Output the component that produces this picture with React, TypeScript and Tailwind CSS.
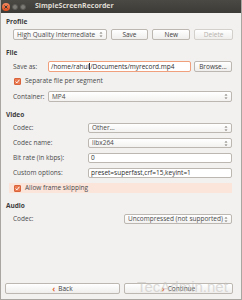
import React from "react";

function Spin() {
  return (
    <svg width="4" height="7" viewBox="0 0 4 7" className="shrink-0">
      <path d="M0.5 2.6 L2 1 L3.5 2.6 Z" fill="#7a7670" />
      <path d="M0.5 4.4 L2 6 L3.5 4.4 Z" fill="#7a7670" />
    </svg>
  );
}

function Combo({ text, className = "" }: { text: string; className?: string }) {
  return (
    <div
      className={
        "flex items-center h-full rounded-[2px] border border-[#bcb7b0] bg-gradient-to-b from-[#ffffff] to-[#f3f2f1] pl-[3px] pr-[3px] overflow-hidden " +
        className
      }
    >
      <span className="flex-1 whitespace-nowrap overflow-hidden">{text}</span>
      <Spin />
    </div>
  );
}

function Btn({ children, disabled = false, className = "" }: { children: React.ReactNode; disabled?: boolean; className?: string }) {
  return (
    <div
      className={
        "flex items-center justify-center h-full rounded-[2px] border border-[#bcb7b0] bg-gradient-to-b from-[#ffffff] to-[#efeeed] " +
        (disabled ? "text-[#b5b1ac] border-[#d3cfca] " : "text-[#3c3c3c] ") +
        className
      }
    >
      {children}
    </div>
  );
}

function Check() {
  return (
    <div className="w-[7px] h-[7px] rounded-[1px] bg-[#ea7b52] border border-[#d9643b] flex items-center justify-center shrink-0">
      <svg width="5" height="5" viewBox="0 0 5 5">
        <path d="M0.6 2.6 L1.9 3.9 L4.4 0.8" stroke="#fff" strokeWidth="1" fill="none" />
      </svg>
    </div>
  );
}

function Header({ children, className = "" }: { children: React.ReactNode; className?: string }) {
  return <div className={"h-[8px] flex items-center pl-[5px] font-bold text-[#3c3c3c] " + className}>{children}</div>;
}

export default function App() {
  return (
    <div
      className="relative w-[242px] h-[300px] flex flex-col bg-[#f2f1f0] border-x border-b border-[#a9a6a1] text-[6.5px] text-[#4a4a4a] overflow-hidden"
      style={{ fontFamily: '"Open Sans", "DejaVu Sans", sans-serif' }}
    >
      {/* title bar */}
      <div className="h-[13px] flex items-center bg-gradient-to-b from-[#4a4944] to-[#3c3b37] pl-[2px] -mx-px">
        <div className="w-[8px] h-[8px] rounded-full bg-gradient-to-b from-[#f58a5e] to-[#df4a16] flex items-center justify-center">
          <svg width="4" height="4" viewBox="0 0 4 4">
            <path d="M0.5 0.5 L3.5 3.5 M3.5 0.5 L0.5 3.5" stroke="#3c3b37" strokeWidth="1" />
          </svg>
        </div>
        <div className="ml-[2px] w-[6px] h-[6px] rounded-full bg-[#7d7b76] border border-[#5a5955]" />
        <div className="ml-[2px] w-[6px] h-[6px] rounded-full bg-[#7d7b76] border border-[#5a5955]" />
        <span className="ml-[9px] font-bold text-[7px] text-[#dfdbd2]">SimpleScreenRecorder</span>
      </div>

      <Header className="mt-[5px]">Profile</Header>
      <div className="mt-[3px] h-[11px] flex pl-[12px] pr-[8px] gap-[4px]">
        <Combo text="High Quality Intermediate" className="w-[94px]" />
        <Btn className="w-[38px]">Save</Btn>
        <Btn className="w-[38px]">New</Btn>
        <Btn disabled className="w-[39px]">Delete</Btn>
      </div>

      <Header className="mt-[9px]">File</Header>
      <div className="mt-[4px] h-[11px] flex items-center pl-[12px] pr-[9px]">
        <span className="w-[35px]">Save as:</span>
        <div className="w-[143px] h-full flex items-center rounded-[2px] border border-[#f0a07c] bg-white pl-[2px] text-[#2e2e2e] whitespace-nowrap">
          /home/rahul
          <span className="inline-block w-px h-[7px] bg-[#333]" />
          /Documents/myrecord.mp4
        </div>
        <Btn className="ml-[3px] flex-1">Browse...</Btn>
      </div>
      <div className="mt-[4px] h-[10px] flex items-center pl-[13px] gap-[4px]">
        <Check />
        <span>Separate file per segment</span>
      </div>
      <div className="mt-[5px] h-[11px] flex items-center pl-[12px] pr-[9px]">
        <span className="w-[35px]">Container:</span>
        <Combo text="MP4" className="flex-1" />
      </div>

      <Header className="mt-[9px]">Video</Header>
      <div className="mt-[4px] flex flex-col gap-[5px] pr-[9px]">
        {[
          { l: "Codec:", v: "Other...", combo: true },
          { l: "Codec name:", v: "libx264", combo: true },
          { l: "Bit rate (in kbps):", v: "0", combo: false },
          { l: "Custom options:", v: "preset=superfast,crf=15,keyint=1", combo: false },
        ].map((r) => (
          <div key={r.l} className="h-[10px] flex items-center pl-[12px]">
            <span className="w-[75px]">{r.l}</span>
            {r.combo ? (
              <Combo text={r.v} className="flex-1" />
            ) : (
              <div className="flex-1 h-full flex items-center rounded-[2px] border border-[#bcb7b0] bg-white pl-[2px] text-[#2e2e2e] whitespace-nowrap">
                {r.v}
              </div>
            )}
          </div>
        ))}
        <div className="h-[10px] flex items-center ml-[8px] pl-[5px] gap-[4px] bg-[#fbe4da]">
          <Check />
          <span>Allow frame skipping</span>
        </div>
      </div>

      <Header className="mt-[9px]">Audio</Header>
      <div className="mt-[4px] h-[10px] flex items-center pl-[12px] pr-[9px]">
        <span className="flex-1">Codec:</span>
        <Combo text="Uncompressed (not supported)" className="w-[108px]" />
      </div>

      <div className="flex-1" />
      <div className="h-[11px] mb-[5px] flex gap-[4px] pl-[4px] pr-[8px]">
        <Btn className="w-[115px] gap-[3px]">
          <span className="text-[#e2672f] font-bold text-[8px] leading-none">‹</span>
          Back
        </Btn>
        <Btn className="flex-1 gap-[3px]">
          <span className="text-[#e2672f] font-bold text-[8px] leading-none">›</span>
          Continue
        </Btn>
      </div>

      {/* watermark */}
      <div
        className="absolute left-[136px] top-[279px] text-[15px] leading-none text-[#c8c6c3] opacity-60 pointer-events-none"
        style={{ fontFamily: '"Liberation Sans", sans-serif' }}
      >
        TecAdmin.net
      </div>
    </div>
  );
}
